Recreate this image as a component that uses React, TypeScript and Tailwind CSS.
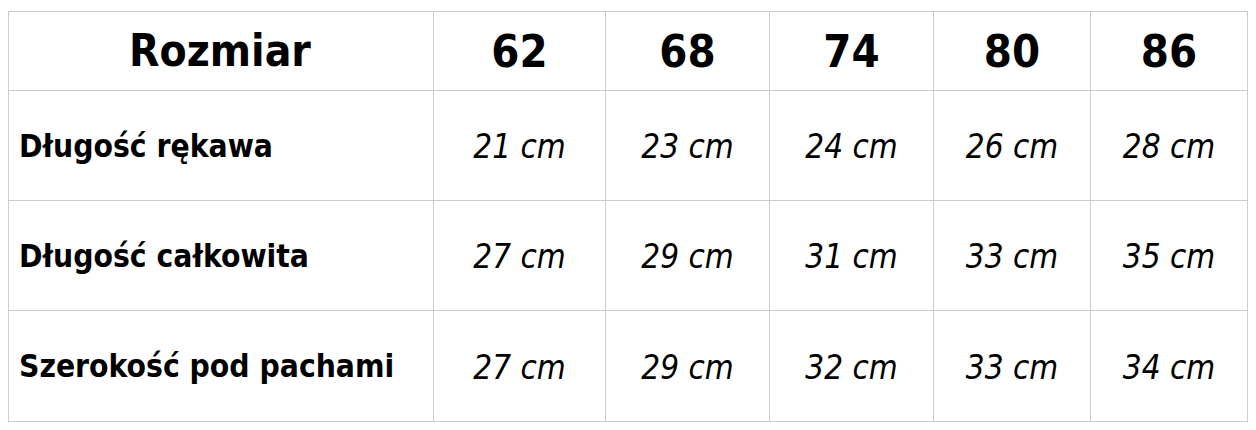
import React from 'react';

const sizes = ['62', '68', '74', '80', '86'];

const rows: { label: string; values: string[] }[] = [
  { label: 'Długość rękawa', values: ['21', '23', '24', '26', '28'] },
  { label: 'Długość całkowita', values: ['27', '29', '31', '33', '35'] },
  { label: 'Szerokość pod pachami', values: ['27', '29', '32', '33', '34'] },
];

const colWidths = ['w-[425px]', 'w-[172px]', 'w-[164px]', 'w-[164px]', 'w-[157px]', 'w-[157px]'];

export default function App() {
  return (
    <div className="w-[1256px] h-[430px] bg-white pl-[8px] pt-[11px] text-black [font-family:'DejaVu_Sans_Condensed','DejaVu_Sans',sans-serif]">
      <table className="table-fixed border-collapse w-[1239px]">
        <colgroup>
          {colWidths.map((w, i) => (
            <col key={i} className={w} />
          ))}
        </colgroup>
        <thead>
          <tr className="h-[79px]">
            <th className="border border-[#cccccc] text-center align-middle font-bold text-[44px] leading-none pr-[2px]">
              Rozmiar
            </th>
            {sizes.map((s) => (
              <th key={s} className="border border-[#cccccc] text-center align-middle font-bold text-[45px] leading-none">
                {s}
              </th>
            ))}
          </tr>
        </thead>
        <tbody>
          {rows.map((row, i) => (
            <tr key={row.label} className={i === 2 ? 'h-[111px]' : 'h-[110px]'}>
              <td className="border border-[#cccccc] pl-[10px] pt-[2px] align-middle font-bold text-[31.5px] leading-none whitespace-nowrap">
                {row.label}
              </td>
              {row.values.map((v, j) => (
                <td key={j} className="border border-[#cccccc] text-center align-middle pt-[2px] italic text-[33px] leading-none">
                  {v} cm
                </td>
              ))}
            </tr>
          ))}
        </tbody>
      </table>
    </div>
  );
}
